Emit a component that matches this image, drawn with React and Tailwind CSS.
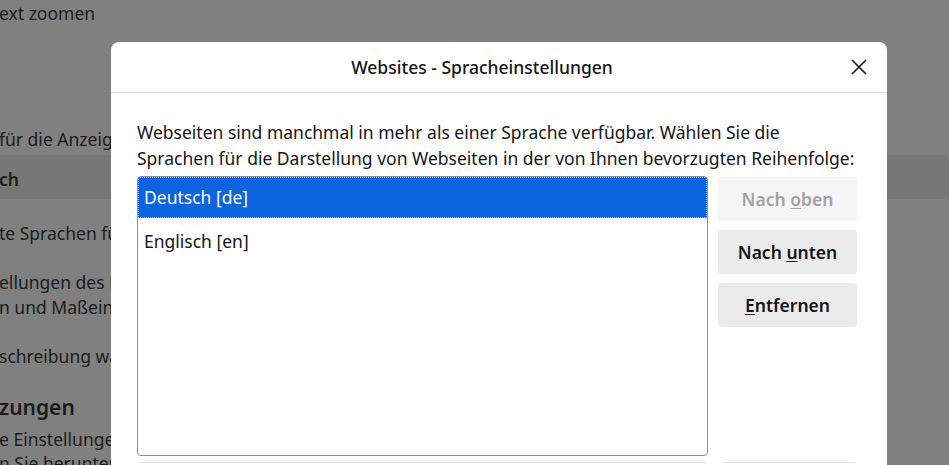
import React from "react";

const font = { fontFamily: '"Segoe UI", "Noto Sans", "Open Sans", sans-serif' };

const BackgroundPage = () => (
  <div className="h-full w-full bg-[#808080] text-[#1c1c1c] text-[17.5px] overflow-hidden" style={font}>
    <div className="h-[26px] leading-[26px] -ml-[1px]">ext zoomen</div>
    <div className="h-[98px]" />
    <div className="h-[31px] leading-[30px] -ml-[1px]">für die Anzeige</div>
    <div className="h-[44px] bg-[#777777] flex items-center pt-[4px] font-semibold -ml-[1px]">ch</div>
    <div className="h-[21px]" />
    <div className="h-[26px] leading-[26px] -ml-[1px]">te Sprachen für</div>
    <div className="h-[24px]" />
    <div className="leading-[25px] -ml-[1px]">
      <div>ellungen des Betriebssystems</div>
      <div>n und Maßeinheiten</div>
    </div>
    <div className="h-[23px]" />
    <div className="h-[26px] leading-[26px] -ml-[1px]">schreibung während</div>
    <div className="h-[24px]" />
    <div className="h-[28px] leading-[28px] text-[21px] font-semibold -ml-[1px]">zungen</div>
    <div className="leading-[24px] -ml-[1px] mt-[6px]">
      <div>e Einstellungen</div>
      <div>n Sie herunterladen</div>
    </div>
  </div>
);

const Button = ({ children, disabled }) => (
  <button
    className={`h-[44px] w-[139px] rounded-[4px] text-[17.5px] font-semibold ${
      disabled ? "bg-[#f5f5f5] text-[#a3a3a3]" : "bg-[#ebebeb] text-[#15141a]"
    }`}
    style={font}
  >
    {children}
  </button>
);

export default function App() {
  return (
    <div className="relative w-[949px] h-[465px] overflow-hidden">
      <BackgroundPage />

      {/* Dialog */}
      <div
        className="absolute left-[111px] top-[42px] w-[776px] h-[440px] bg-white rounded-[8px] text-[#15141a]"
        style={font}
      >
        <div className="relative h-[51px] border-b border-[#d7d7db] flex items-center justify-center pr-[34px]">
          <span className="text-[17.5px] font-medium">Websites - Spracheinstellungen</span>
          <button className="absolute right-[19px] top-[16px] w-[18px] h-[18px] flex items-center justify-center">
            <svg width="18" height="18" viewBox="0 0 18 18" fill="none" stroke="#15141a" strokeWidth="1.6">
              <path d="M2 2L16 16M16 2L2 16" />
            </svg>
          </button>
        </div>

        <div className="px-[26px] pt-[26px]">
          <p className="text-[17.5px] leading-[26px] whitespace-nowrap">
            Webseiten sind manchmal in mehr als einer Sprache verfügbar. Wählen Sie die
            <br />
            Sprachen für die Darstellung von Webseiten in der von Ihnen bevorzugten Reihenfolge:
          </p>

          <div className="flex gap-[10px] mt-[5px]">
            <div className="w-[571px] h-[280px] border border-[#8f8f9d] rounded-[4px] overflow-hidden">
              <div className="h-[41px] bg-[#0c63df] text-white text-[17.5px] flex items-center px-[6px] outline-dotted outline-1 outline-[#d6c26a] -outline-offset-1">
                Deutsch [de]
              </div>
              <div className="h-[46px] text-[17.5px] flex items-center px-[6px]">Englisch [en]</div>
            </div>

            <div className="flex flex-col gap-[9px] pt-[1px]">
              <Button disabled>
                Nach <span className="underline underline-offset-2">o</span>ben
              </Button>
              <Button>
                Nach <span className="underline underline-offset-2">u</span>nten
              </Button>
              <Button>
                <span className="underline underline-offset-2">E</span>ntfernen
              </Button>
            </div>
          </div>

          <div className="flex gap-[14px] mt-[6px]">
            <div className="w-[571px] h-[10px] border-t border-[#e3e3e3] rounded-t-[4px]" />
            <div className="w-[135px] h-[10px] border-t border-[#e3e3e3] rounded-t-[4px]" />
          </div>
        </div>
      </div>
    </div>
  );
}
